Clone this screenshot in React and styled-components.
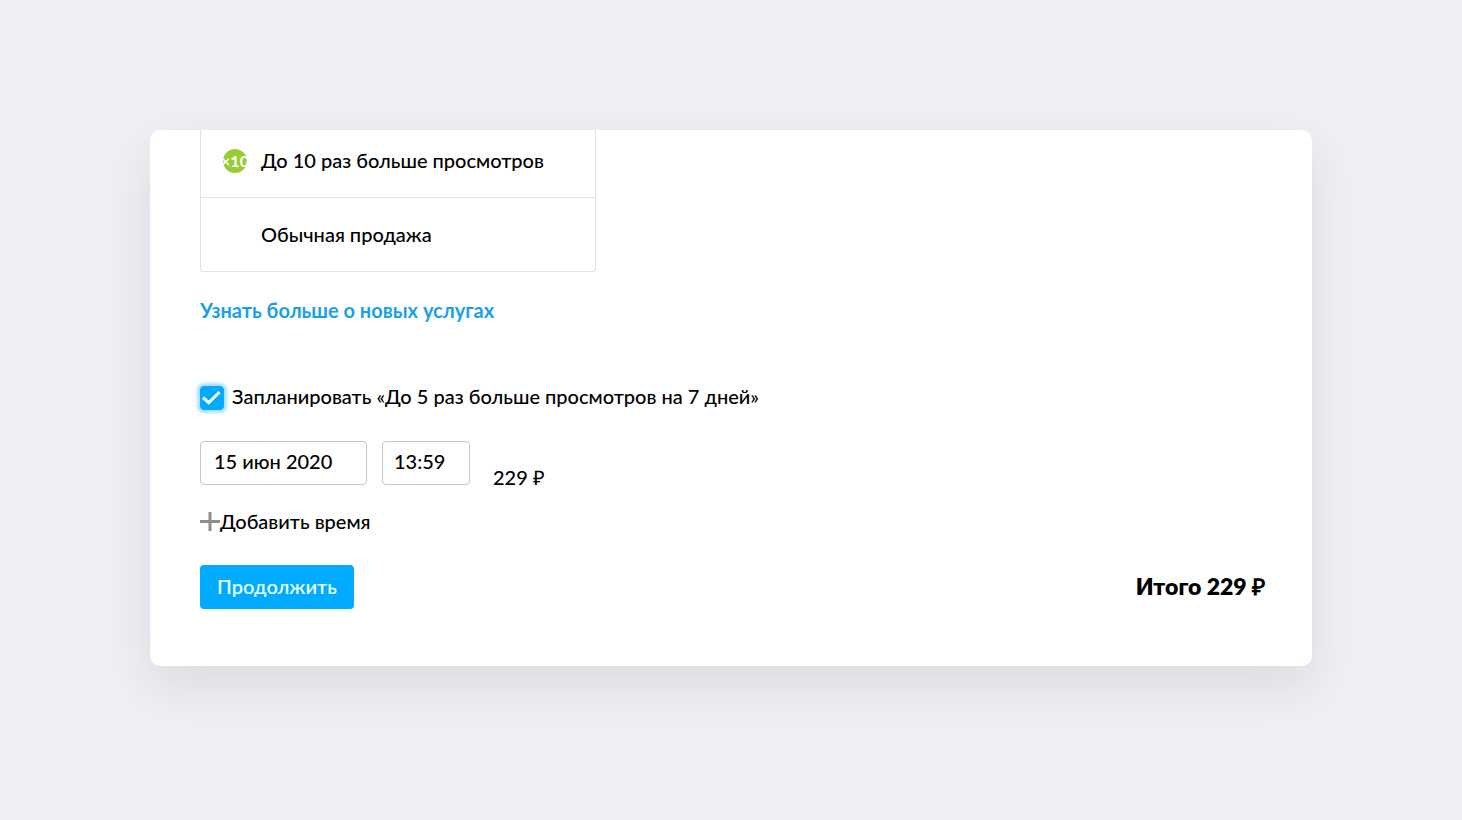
import React, { useState } from "react";
import styled, { createGlobalStyle } from "styled-components";

const GlobalStyle = createGlobalStyle`
  * { box-sizing: border-box; }
  body {
    margin: 0;
    min-height: 100vh;
    background: #efeff4;
    color: #000;
    font-family: Lato, "Liberation Sans", sans-serif;
    font-size: 20px;
    font-weight: 500;
    line-height: 24px;
  }
  button, input { font: inherit; color: inherit; }
`;

const Page = styled.div`
  padding: 130px 150px;
`;

const Card = styled.main`
  overflow: hidden;
  padding: 0 47px 57px 50px;
  border-radius: 10px;
  background: #fff;
  box-shadow: 0 20px 50px rgba(40, 35, 50, 0.1);
`;

const OptionList = styled.ul`
  list-style: none;
  width: 396px;
  max-width: 100%;
  margin: -7px 0 0;
  padding: 0;
  border: 1px solid #e2e2e2;
  border-radius: 3px;
`;

const OptionItem = styled.li`
  & + & { border-top: 1px solid #e2e2e2; }
`;

const OptionButton = styled.button`
  display: flex;
  align-items: center;
  gap: 14px;
  width: 100%;
  height: 73px;
  padding: 0 22px;
  border: 0;
  background: none;
  text-align: left;
  cursor: pointer;
`;

const OptionTitle = styled.span`
  padding-bottom: 2px;
`;

const BadgeSlot = styled.span`
  flex: none;
  width: 24px;
  height: 24px;
`;

const Badge = styled.span`
  display: flex;
  align-items: center;
  justify-content: center;
  width: 24px;
  height: 24px;
  border-radius: 50%;
  background: #97cc33;
  color: #fff;
  font-size: 16px;
  font-weight: 700;
`;

const MoreLink = styled.a`
  display: block;
  width: fit-content;
  margin-top: 26px;
  color: #1a9fe8;
  font-weight: 700;
  text-decoration: none;
`;

const PlanLabel = styled.label`
  display: flex;
  align-items: flex-start;
  gap: 8px;
  width: fit-content;
  margin-top: 64px;
  line-height: 20px;
`;

const CheckBox = styled.span`
  position: relative;
  flex: none;
  width: 24px;
  height: 24px;

  svg {
    position: absolute;
    inset: 0;
    pointer-events: none;
  }
`;

const CheckInput = styled.input`
  appearance: none;
  display: block;
  width: 24px;
  height: 24px;
  margin: 0;
  border: 1px solid #c4c4c4;
  border-radius: 4px;
  background: #fff;

  &:checked {
    border-color: #0af;
    background: #0af;
    box-shadow: 0 0 3px 3px #a9e1ff;
  }
`;

const Schedule = styled.div`
  display: flex;
  gap: 15px;
  margin-top: 31px;
`;

const Field = styled.input`
  width: ${(p) => p.$width}px;
  height: 44px;
  padding: 0 ${(p) => p.$pad}px 4px;
  border: 1px solid #c6c6c6;
  border-radius: 4px;
  background: #fff;
`;

const Price = styled.span`
  align-self: flex-end;
  margin: 0 0 -4px 8px;
`;

const AddButton = styled.button`
  display: flex;
  align-items: center;
  margin-top: 24px;
  padding: 0;
  border: 0;
  background: none;
  cursor: pointer;
`;

const Footer = styled.div`
  display: flex;
  align-items: center;
  justify-content: space-between;
  margin-top: 32px;
`;

const SubmitButton = styled.button`
  height: 44px;
  padding: 0 17px 2px;
  border: 0;
  border-radius: 4px;
  background: #0af;
  color: #e6ffff;
  font-weight: 600;
  cursor: pointer;
`;

const Total = styled.strong`
  padding-bottom: 2px;
  font-size: 23px;
  font-weight: 800;
`;

function CheckMark() {
  return (
    <svg width="24" height="24" viewBox="0 0 24 24" fill="none" aria-hidden="true">
      <path d="M3 11.5 8.8 16.6 19.5 6" stroke="#fff" strokeWidth="3" />
    </svg>
  );
}

function PlusIcon() {
  return (
    <svg width="20" height="20" viewBox="0 0 20 20" aria-hidden="true">
      <path d="M0 10.5h20M10 1v19" stroke="#8e8e8e" strokeWidth="3" />
    </svg>
  );
}

export default function App() {
  const [planned, setPlanned] = useState(true);
  return (
    <>
      <GlobalStyle />
      <Page>
        <Card>
          <OptionList>
            <OptionItem>
              <OptionButton type="button">
                <Badge>×10</Badge>
                <OptionTitle>До 10 раз больше просмотров</OptionTitle>
              </OptionButton>
            </OptionItem>
            <OptionItem>
              <OptionButton type="button">
                <BadgeSlot />
                <OptionTitle>Обычная продажа</OptionTitle>
              </OptionButton>
            </OptionItem>
          </OptionList>

          <MoreLink href="#services">Узнать больше о новых услугах</MoreLink>

          <PlanLabel>
            <CheckBox>
              <CheckInput
                type="checkbox"
                checked={planned}
                onChange={(e) => setPlanned(e.target.checked)}
              />
              {planned && <CheckMark />}
            </CheckBox>
            Запланировать «До 5 раз больше просмотров на 7 дней»
          </PlanLabel>

          <Schedule>
            <Field $width={167} $pad={13} aria-label="Дата" defaultValue="15 июн 2020" />
            <Field $width={88} $pad={11} aria-label="Время" defaultValue="13:59" />
            <Price>229 ₽</Price>
          </Schedule>

          <AddButton type="button">
            <PlusIcon />
            Добавить время
          </AddButton>

          <Footer>
            <SubmitButton type="button">Продолжить</SubmitButton>
            <Total>Итого 229 ₽</Total>
          </Footer>
        </Card>
      </Page>
    </>
  );
}
